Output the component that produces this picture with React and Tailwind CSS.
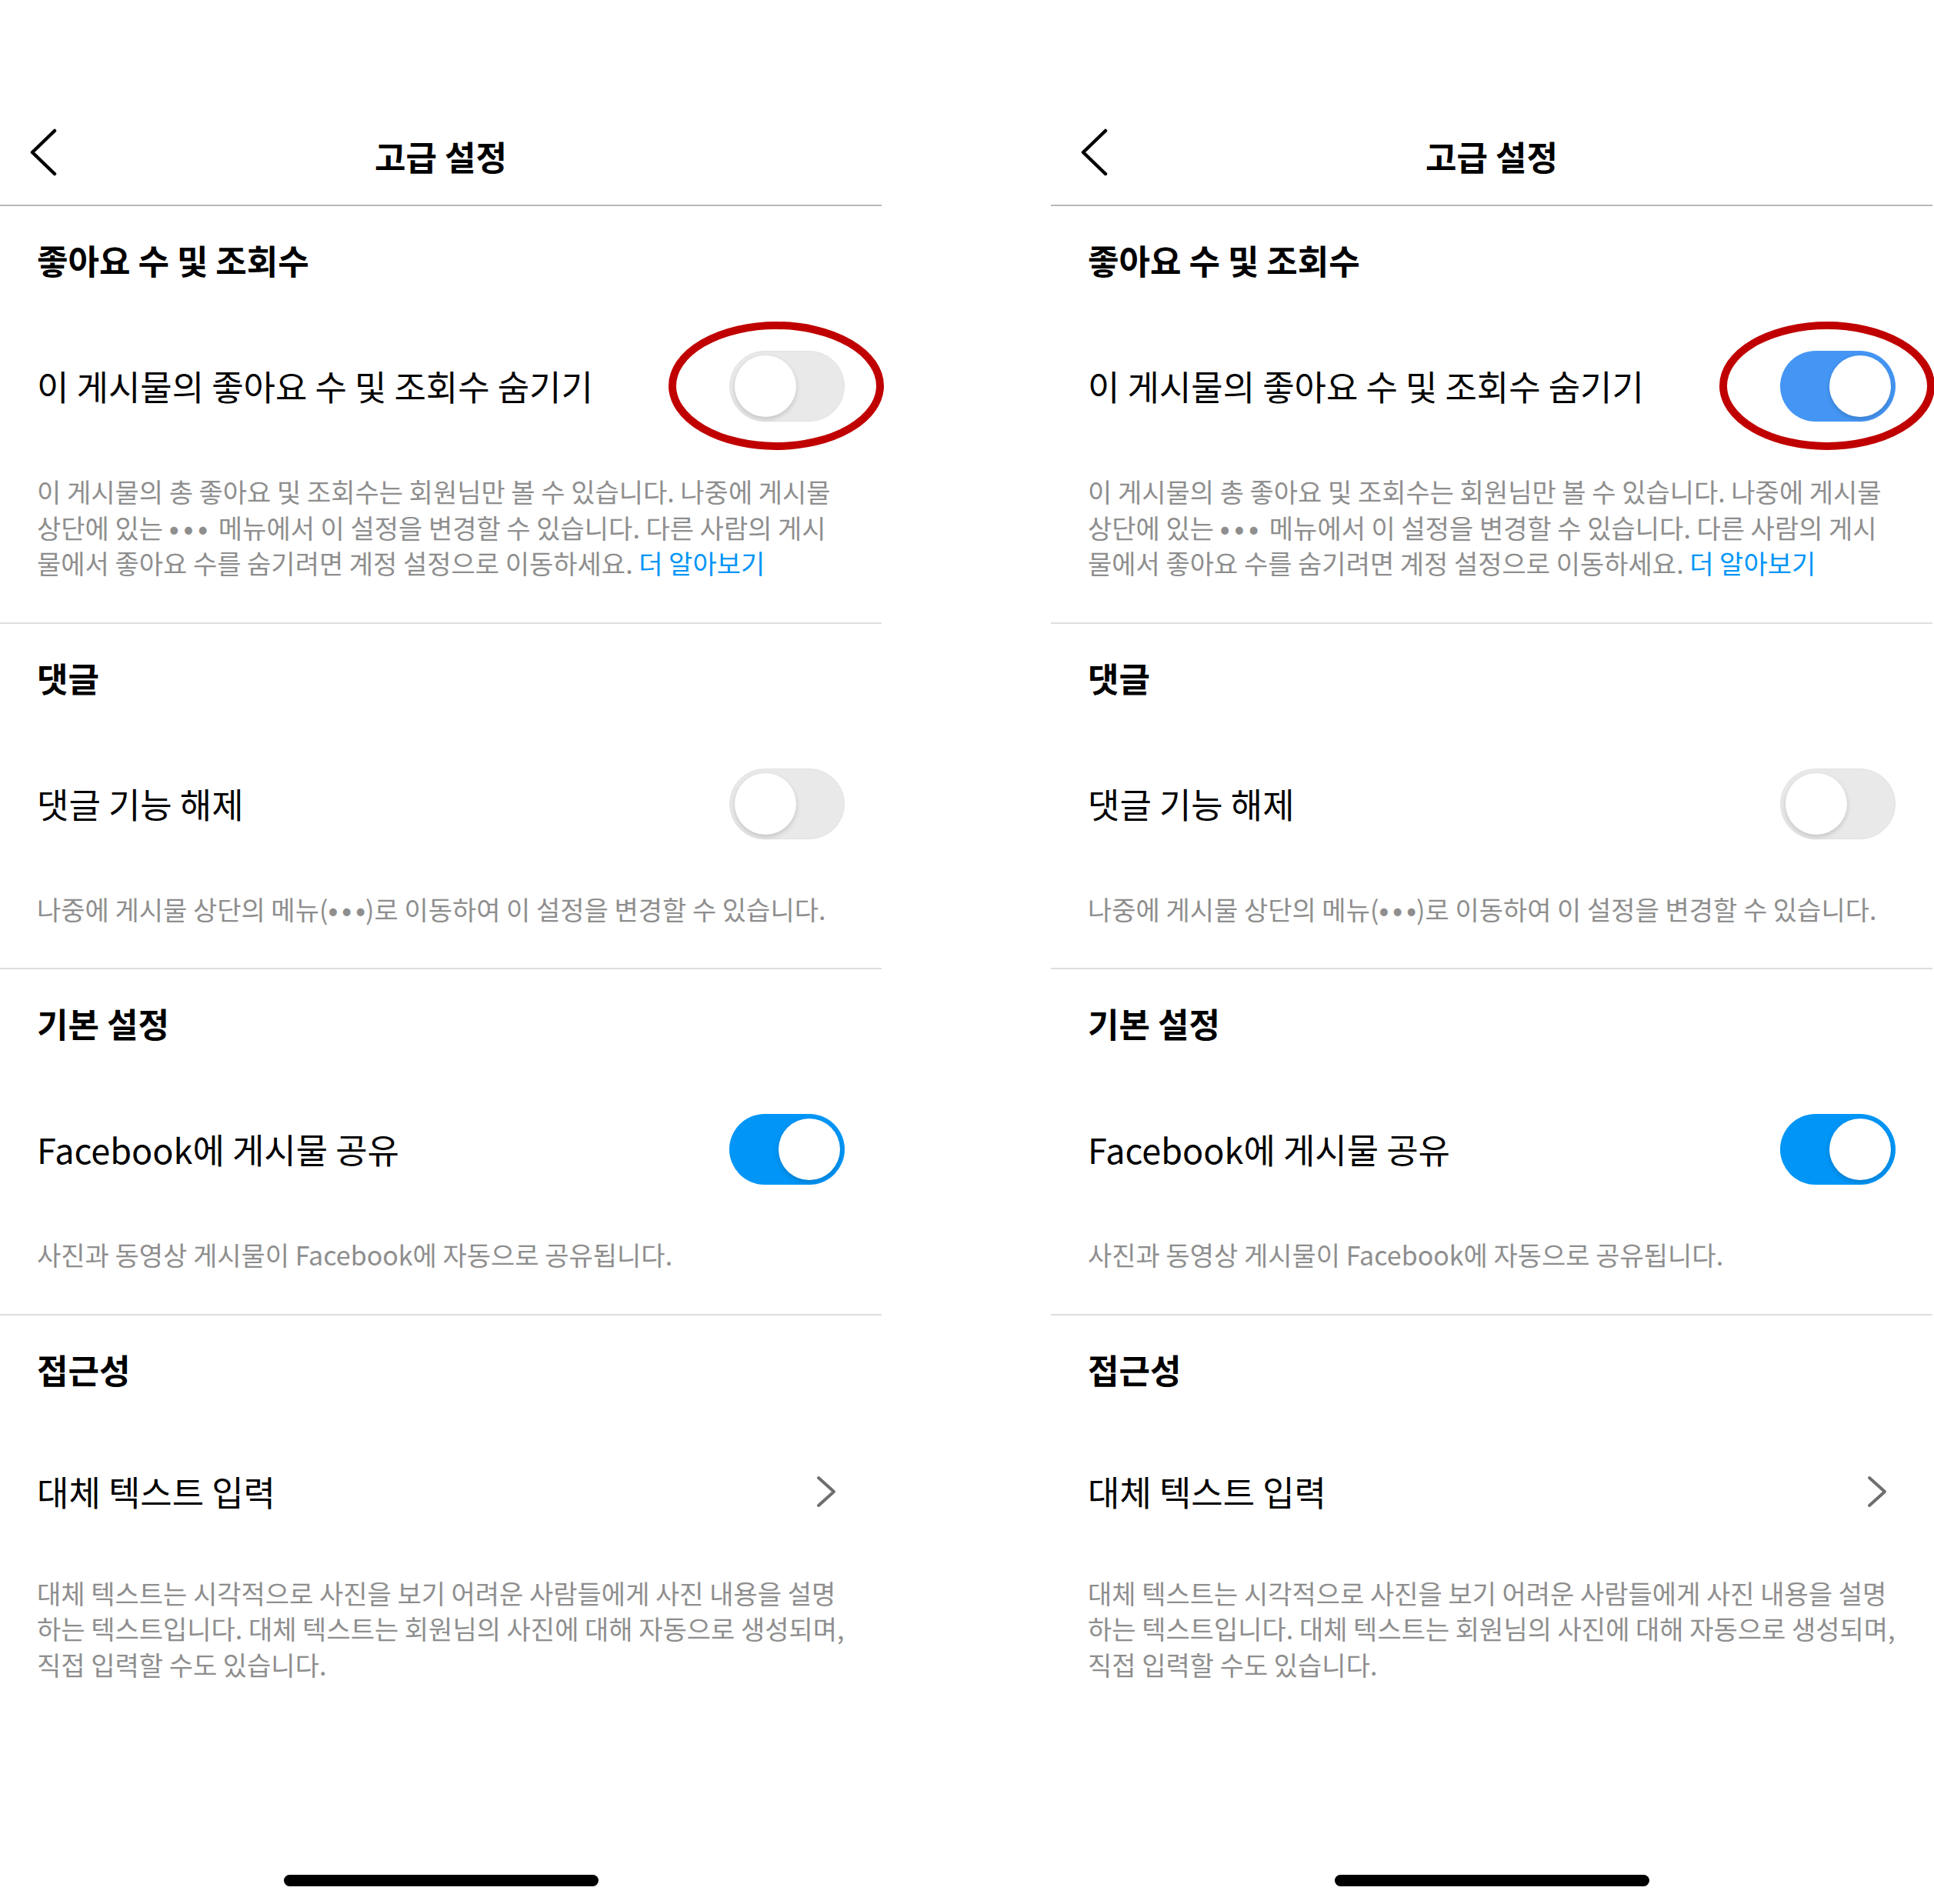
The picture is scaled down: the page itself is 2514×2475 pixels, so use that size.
import React from 'react';

// one settings screen; the two screenshots differ only in the first toggle
function Toggle({ on, color = 'bg-[#0095f6]' }) {
    return (
        <div
            className={`w-[150px] h-[92px] rounded-full flex items-center px-[6px] ${
                on ? `${color} justify-end` : 'bg-[#e9e9e9] justify-start border-[1.5px] border-[#e2e2e2]'
            }`}
        >
            <div className="w-[80px] h-[80px] rounded-full bg-white shadow-[0_3px_6px_rgba(0,0,0,0.16)]"></div>
        </div>
    );
}

function Circled({ children }) {
    return (
        <div className="relative">
            {children}
            <svg
                className="absolute left-[-79px] top-[-38px] pointer-events-none"
                width="280"
                height="167"
                viewBox="0 0 280 167"
            >
                <ellipse cx="140" cy="83.5" rx="135" ry="78.5" fill="none" stroke="#c00000" strokeWidth="10" />
            </svg>
        </div>
    );
}

function SectionTitle({ children }) {
    return (
        <div className="h-[140px] flex items-center px-[48px]">
            <span className="text-[44px] leading-[56px] font-bold text-black">{children}</span>
        </div>
    );
}

function Row({ label, right, height = 'h-[188px]' }) {
    return (
        <div className={`${height} flex items-center justify-between px-[48px]`}>
            <span className="text-[45px] leading-[56px] text-black whitespace-nowrap">{label}</span>
            {right}
        </div>
    );
}

function Dots() {
    return <span className="tracking-[6px] font-bold">•••</span>;
}

function Desc({ lines, last = false }) {
    return (
        <div className={`px-[48px] pt-[20px] ${last ? '' : 'pb-[53px]'} text-[34px] leading-[46.5px] text-[#8e8e8e]`}>
            {lines.map((line, i) => (
                <div key={i} className="whitespace-nowrap">
                    {line}
                </div>
            ))}
        </div>
    );
}

function Divider() {
    return <div className="h-[2px] bg-[#dedede]"></div>;
}

function Panel({ hideOn }) {
    return (
        <div className="w-[1146px] h-[2475px] flex flex-col bg-white">
            {/* header */}
            <div className="h-[266px] flex items-end">
                <div className="w-full h-[126px] grid grid-cols-[1fr_auto_1fr] items-center">
                    <div className="pl-[38px] pb-[10px]">
                        <svg width="36" height="62" viewBox="0 0 36 62">
                            <path d="M33 3 L4 31 L33 59" fill="none" stroke="#000" strokeWidth="4.5" strokeLinecap="round" strokeLinejoin="round" />
                        </svg>
                    </div>
                    <span className="text-[44px] leading-[56px] font-bold text-black">고급 설정</span>
                    <div></div>
                </div>
            </div>
            <div className="h-[2px] bg-[#b8b8b8]"></div>

            {/* likes and views */}
            <SectionTitle>좋아요 수 및 조회수</SectionTitle>
            <Row
                label="이 게시물의 좋아요 수 및 조회수 숨기기"
                right={
                    <Circled>
                        <Toggle on={hideOn} color="bg-[#4596f4]" />
                    </Circled>
                }
            />
            <Desc
                lines={[
                    '이 게시물의 총 좋아요 및 조회수는 회원님만 볼 수 있습니다. 나중에 게시물',
                    <>
                        상단에 있는 <Dots /> 메뉴에서 이 설정을 변경할 수 있습니다. 다른 사람의 게시
                    </>,
                    <>
                        물에서 좋아요 수를 숨기려면 계정 설정으로 이동하세요. <span className="text-[#0095f6]">더 알아보기</span>
                    </>,
                ]}
            />
            <Divider />

            {/* comments */}
            <SectionTitle>댓글</SectionTitle>
            <Row label="댓글 기능 해제" right={<Toggle on={false} />} />
            <Desc
                lines={[
                    <>
                        나중에 게시물 상단의 메뉴(<span className="tracking-[5px] font-bold">••</span><span className="font-bold">•</span>)로 이동하여 이 설정을 변경할 수 있습니다.
                    </>,
                ]}
            />
            <Divider />

            {/* basics */}
            <SectionTitle>기본 설정</SectionTitle>
            <Row label="Facebook에 게시물 공유" right={<Toggle on={true} />} />
            <Desc lines={['사진과 동영상 게시물이 Facebook에 자동으로 공유됩니다.']} />
            <Divider />

            {/* accessibility */}
            <SectionTitle>접근성</SectionTitle>
            <Row
                label="대체 텍스트 입력"
                height="h-[178px]"
                right={
                    <svg className="mr-[10px]" width="28" height="42" viewBox="0 0 28 42">
                        <path d="M4 3 L24 21 L4 39" fill="none" stroke="#6e6e6e" strokeWidth="4" strokeLinecap="round" strokeLinejoin="round" />
                    </svg>
                }
            />
            <Desc
                last
                lines={[
                    '대체 텍스트는 시각적으로 사진을 보기 어려운 사람들에게 사진 내용을 설명',
                    '하는 텍스트입니다. 대체 텍스트는 회원님의 사진에 대해 자동으로 생성되며,',
                    '직접 입력할 수도 있습니다.',
                ]}
            />

            <div className="flex-1"></div>
            <div className="flex justify-center pb-[23px]">
                <div className="w-[409px] h-[15px] rounded-full bg-black"></div>
            </div>
        </div>
    );
}

export default function App() {
    return (
        <div className="w-[2514px] h-[2475px] bg-white flex gap-[220px] overflow-hidden font-['Noto_Sans_CJK_KR','Noto_Sans',sans-serif]">
            <Panel hideOn={false} />
            <Panel hideOn={true} />
        </div>
    );
}
